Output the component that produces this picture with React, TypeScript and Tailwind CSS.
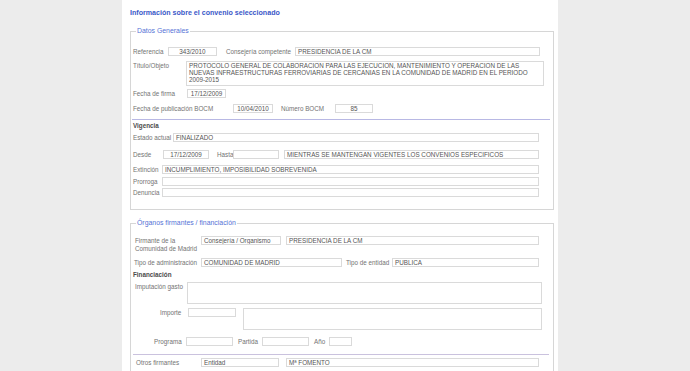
import React from "react";

const box = "h-[9px] shrink-0 border border-[#dadada] bg-white px-[2px] leading-[7px] text-[#555] whitespace-nowrap overflow-hidden";
const lbl = "shrink-0 leading-[8px] text-[#737373] whitespace-nowrap";

export default function App() {
  return (
    <div className="h-[371px] w-[690px] overflow-hidden bg-[#ececec] font-['Liberation_Sans',Arial,sans-serif] text-[6.3px]">
      <div className="ml-[122px] h-full w-[436px] bg-white pt-[9px]">
        <h1 className="ml-[8px] text-[7.1px] font-bold leading-[8px] text-[#3a58c8]">
          Información sobre el convenio seleccionado
        </h1>

        {/* Datos Generales */}
        <fieldset className="ml-[8px] mt-[10px] w-[424px] border border-[#d6d6d6] pb-[12px]">
          <legend className="ml-[5px] px-[1px] text-[6.9px] leading-[8px] text-[#5572d6]">Datos Generales</legend>
          <div className="pt-[12px]">
            <div className="flex items-center">
              <span className={`${lbl} ml-[2px] w-[35px]`}>Referencia</span>
              <div className={`${box} w-[49px] text-center`}>343/2010</div>
              <span className={`${lbl} ml-[9px] w-[69px]`}>Consejería competente</span>
              <div className={`${box} w-[245px]`}>PRESIDENCIA DE LA CM</div>
            </div>
            <div className="mt-[5px] flex items-start">
              <span className={`${lbl} ml-[2px] mt-[1px] w-[53px]`}>Título/Objeto</span>
              <div className="h-[25px] w-[358px] shrink-0 border border-[#dadada] px-[2px] leading-[7px] text-[#555]">
                PROTOCOLO GENERAL DE COLABORACION PARA LAS EJECUCION, MANTENIMIENTO Y OPERACION DE LAS NUEVAS INFRAESTRUCTURAS FERROVIARIAS DE CERCANIAS EN LA COMUNIDAD DE MADRID EN EL PERIODO 2009-2015
              </div>
            </div>
            <div className="mt-[3px] flex items-center">
              <span className={`${lbl} ml-[2px] w-[54px]`}>Fecha de firma</span>
              <div className={`${box} w-[39px] text-center`}>17/12/2009</div>
            </div>
            <div className="mt-[6px] flex items-center">
              <span className={`${lbl} ml-[2px] w-[100px]`}>Fecha de publicación BOCM</span>
              <div className={`${box} w-[40px] text-center`}>10/04/2010</div>
              <span className={`${lbl} ml-[8px] w-[54px]`}>Número BOCM</span>
              <div className={`${box} w-[38px] text-center`}>85</div>
            </div>
            <div className="ml-[1px] mt-[6px] h-px w-[418px] bg-[#b8b8e4]" />
            <div className="ml-[2px] mt-[2px] font-bold leading-[8px] text-[#4a4a4a]">Vigencia</div>
            <div className="mt-[3px] flex items-center">
              <span className={`${lbl} ml-[2px] w-[40px]`}>Estado actual</span>
              <div className={`${box} w-[366px]`}>FINALIZADO</div>
            </div>
            <div className="mt-[8px] flex items-center">
              <span className={`${lbl} ml-[2px] w-[30px]`}>Desde</span>
              <div className={`${box} w-[46px] text-center`}>17/12/2009</div>
              <span className={`${lbl} ml-[8px] w-[16px]`}>Hasta</span>
              <div className={`${box} w-[46px]`} />
              <div className={`${box} ml-[5px] w-[255px]`}>MIENTRAS SE MANTENGAN VIGENTES LOS CONVENIOS ESPECIFICOS</div>
            </div>
            <div className="mt-[6px] flex items-center">
              <span className={`${lbl} ml-[2px] w-[29px]`}>Extinción</span>
              <div className={`${box} w-[377px]`}>INCUMPLIMIENTO, IMPOSIBILIDAD SOBREVENIDA</div>
            </div>
            <div className="mt-[3px] flex items-center">
              <span className={`${lbl} ml-[2px] w-[29px]`}>Prorroga</span>
              <div className={`${box} w-[377px]`} />
            </div>
            <div className="mt-[2px] flex items-center">
              <span className={`${lbl} ml-[2px] w-[29px]`}>Denuncia</span>
              <div className={`${box} w-[377px]`} />
            </div>
          </div>
        </fieldset>

        {/* Órganos firmantes */}
        <fieldset className="ml-[8px] mt-[9px] w-[424px] border border-[#d6d6d6] pb-[30px]">
          <legend className="ml-[5px] px-[1px] text-[6.9px] leading-[8px] text-[#5572d6]">
            Órganos firmantes / financiación
          </legend>
          <div className="pt-[9px]">
            <div className="flex items-start">
              <span className={`${lbl} ml-[4px] mt-[1px] w-[66px] whitespace-normal`}>
                Firmante de la
                <br />
                Comunidad de Madrid
              </span>
              <div className={`${box} w-[80px]`}>Consejería / Organismo</div>
              <div className={`${box} ml-[5px] w-[253px]`}>PRESIDENCIA DE LA CM</div>
            </div>
            <div className="mt-[5px] flex items-center">
              <span className={`${lbl} ml-[3px] w-[67px]`}>Tipo de administración</span>
              <div className={`${box} w-[141px]`}>COMUNIDAD DE MADRID</div>
              <span className={`${lbl} ml-[4px] w-[46px]`}>Tipo de entidad</span>
              <div className={`${box} w-[147px]`}>PUBLICA</div>
            </div>
            <div className="ml-[2px] mt-[4px] font-bold leading-[8px] text-[#4a4a4a]">Financiación</div>
            <div className="mt-[3px] flex items-start">
              <span className={`${lbl} ml-[4px] mt-[1px] w-[52px]`}>Imputación gasto</span>
              <div className="h-[22px] w-[355px] shrink-0 border border-[#dadada]" />
            </div>
            <div className="mt-[4px] flex items-start">
              <span className={`${lbl} ml-[29px] mt-[1px] w-[28px]`}>Importe</span>
              <div className={`${box} w-[48px]`} />
              <div className="ml-[7px] h-[22px] w-[299px] shrink-0 border border-[#dadada]" />
            </div>
            <div className="mt-[7px] flex items-center">
              <span className={`${lbl} ml-[23px] w-[32px]`}>Programa</span>
              <div className={`${box} w-[47px]`} />
              <span className={`${lbl} ml-[5px] w-[24px]`}>Partida</span>
              <div className={`${box} w-[47px]`} />
              <span className={`${lbl} ml-[5px] w-[15px]`}>Año</span>
              <div className={`${box} w-[23px]`} />
            </div>
            <div className="ml-[2px] mt-[8px] h-px w-[416px] bg-[#cac2de]" />
            <div className="mt-[3px] flex items-center">
              <span className={`${lbl} ml-[5px] w-[65px]`}>Otros firmantes</span>
              <div className={`${box} w-[78px]`}>Entidad</div>
              <div className={`${box} ml-[7px] w-[253px]`}>Mª FOMENTO</div>
            </div>
          </div>
        </fieldset>
      </div>
    </div>
  );
}
